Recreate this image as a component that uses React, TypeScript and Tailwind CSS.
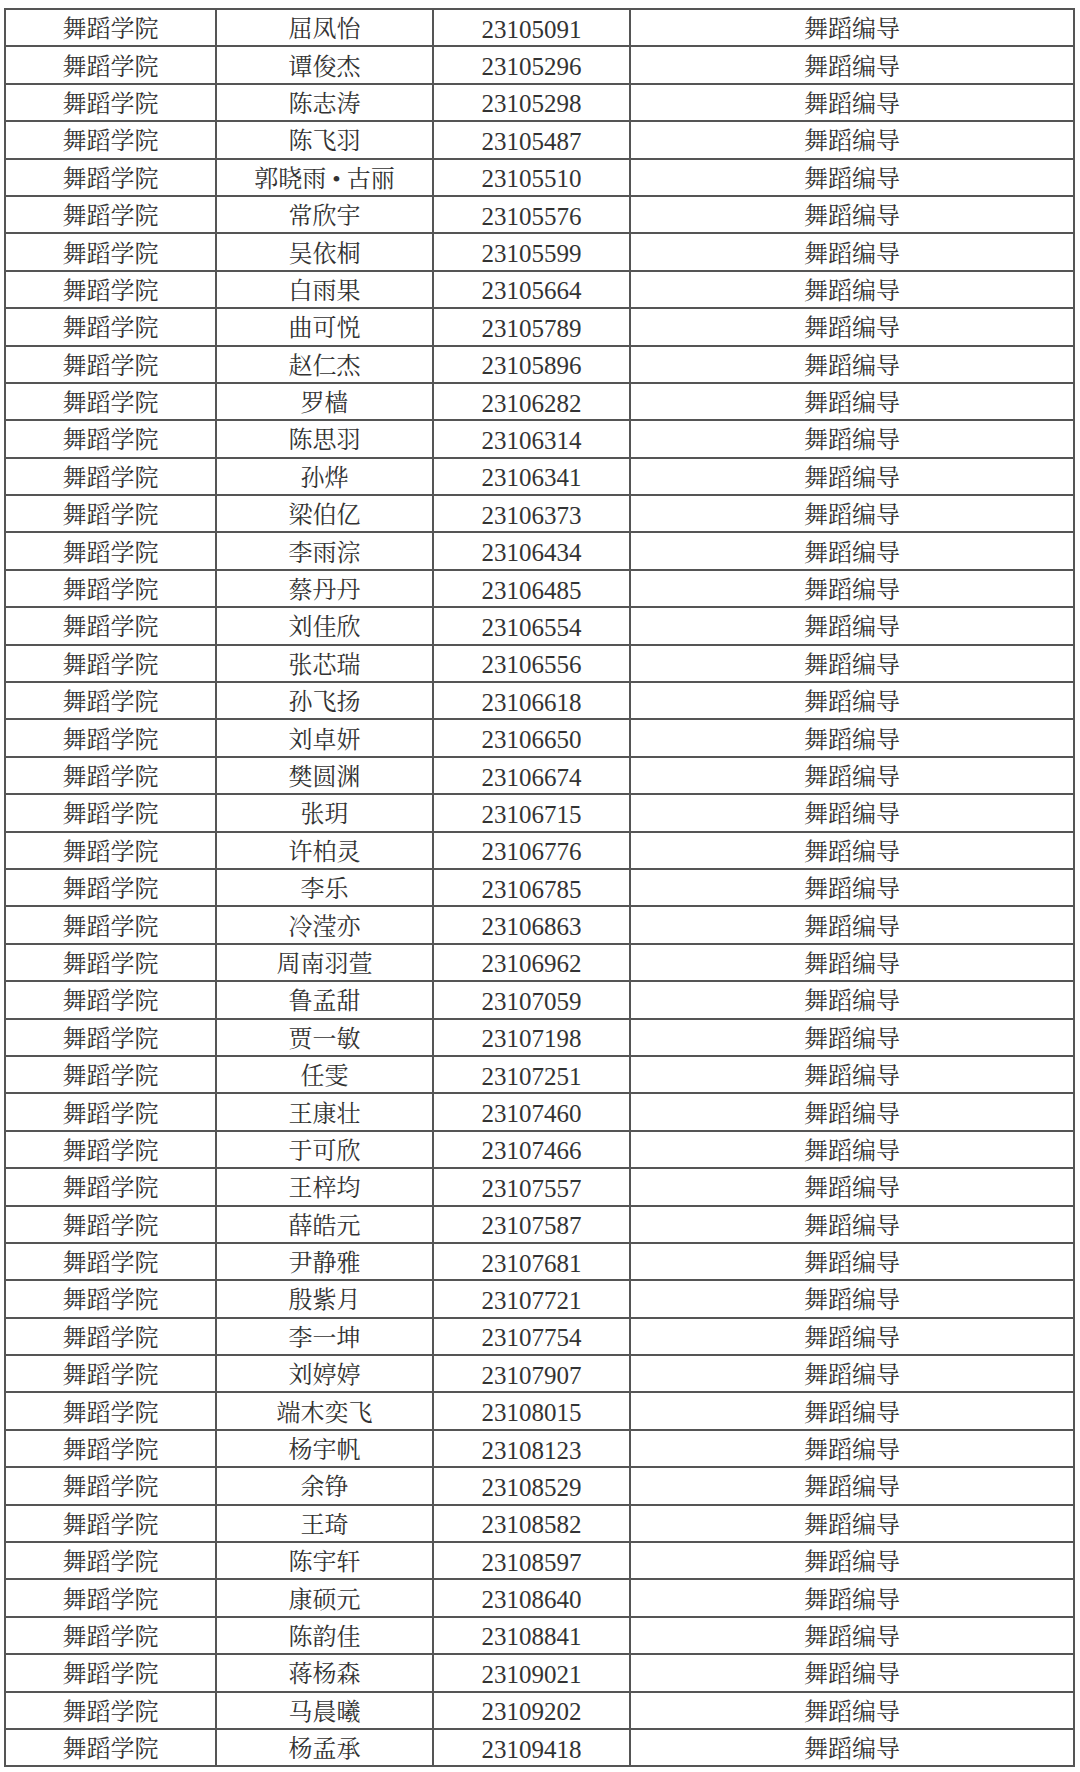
import React from "react";

const rows: [string, string][] = [
  ["屈凤怡", "23105091"],
  ["谭俊杰", "23105296"],
  ["陈志涛", "23105298"],
  ["陈飞羽", "23105487"],
  ["郭晓雨 • 古丽", "23105510"],
  ["常欣宇", "23105576"],
  ["吴依桐", "23105599"],
  ["白雨果", "23105664"],
  ["曲可悦", "23105789"],
  ["赵仁杰", "23105896"],
  ["罗樯", "23106282"],
  ["陈思羽", "23106314"],
  ["孙烨", "23106341"],
  ["梁伯亿", "23106373"],
  ["李雨淙", "23106434"],
  ["蔡丹丹", "23106485"],
  ["刘佳欣", "23106554"],
  ["张芯瑞", "23106556"],
  ["孙飞扬", "23106618"],
  ["刘卓妍", "23106650"],
  ["樊圆渊", "23106674"],
  ["张玥", "23106715"],
  ["许柏灵", "23106776"],
  ["李乐", "23106785"],
  ["冷滢亦", "23106863"],
  ["周南羽萱", "23106962"],
  ["鲁孟甜", "23107059"],
  ["贾一敏", "23107198"],
  ["任雯", "23107251"],
  ["王康壮", "23107460"],
  ["于可欣", "23107466"],
  ["王梓均", "23107557"],
  ["薛皓元", "23107587"],
  ["尹静雅", "23107681"],
  ["殷紫月", "23107721"],
  ["李一坤", "23107754"],
  ["刘婷婷", "23107907"],
  ["端木奕飞", "23108015"],
  ["杨宇帆", "23108123"],
  ["余铮", "23108529"],
  ["王琦", "23108582"],
  ["陈宇轩", "23108597"],
  ["康硕元", "23108640"],
  ["陈韵佳", "23108841"],
  ["蒋杨森", "23109021"],
  ["马晨曦", "23109202"],
  ["杨孟承", "23109418"],
];

export default function App() {
  return (
    <div className="w-[1080px] h-[1772px] bg-white pt-[8px] pl-[4px] font-['Liberation_Serif','Noto_Serif_CJK_SC','Noto_Sans_CJK_SC',serif] text-[#333] text-[24px]">
      <table className="table-fixed border-collapse border-2 border-[#555] w-[1070px]">
        <colgroup>
          <col className="w-[211px]" />
          <col className="w-[217px]" />
          <col className="w-[197px]" />
          <col className="w-[444px]" />
        </colgroup>
        <tbody>
          {rows.map(([name, id], i) => (
            <tr key={i} className="h-[37.4px]">
              <td className="border-2 border-[#555] text-center p-0 pt-[3px] leading-none">舞蹈学院</td>
              <td className="border-2 border-[#555] text-center p-0 pt-[3px] leading-none">{name}</td>
              <td className="border-2 border-[#555] text-center p-0 pt-[3px] leading-none text-[25px]">{id}</td>
              <td className="border-2 border-[#555] text-center p-0 pt-[3px] leading-none">舞蹈编导</td>
            </tr>
          ))}
        </tbody>
      </table>
    </div>
  );
}
